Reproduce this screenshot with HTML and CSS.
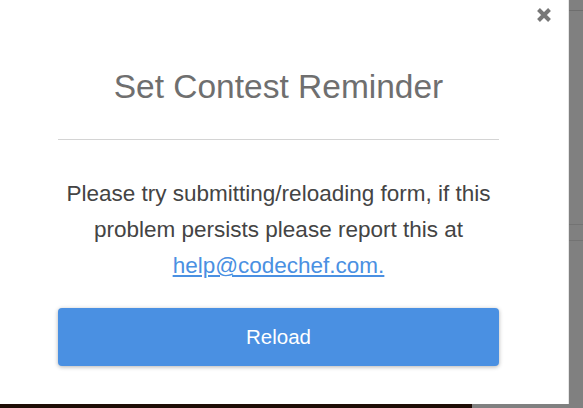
FILE: index.html
```html
<!DOCTYPE html>
<html>
<head>
<meta charset="utf-8">
<link rel="stylesheet" href="styles.css">
</head>
<body>
<div class="page">
  <div class="main">
    <div class="modal">
      <button class="close" aria-label="Close">
        <svg width="16" height="16" viewBox="0 0 16 16"><path d="M2.5 2.5 L13.5 13.5 M13.5 2.5 L2.5 13.5" stroke="#777" stroke-width="4" stroke-linecap="butt"/></svg>
      </button>
      <h2 class="title">Set Contest Reminder</h2>
      <hr class="rule">
      <p class="msg">Please try submitting/reloading form, if this problem persists please report this at <a href="#">help@codechef.com.</a></p>
      <button class="reload">Reload</button>
    </div>
    <div class="footer-strip"></div>
  </div>
  <div class="side">
    <div class="side-top"></div>
    <div class="side-mid"></div>
  </div>
</div>
</body>
</html>
```
FILE: styles.css
```css
* { box-sizing: border-box; }
html, body { margin: 0; padding: 0; }
body { background: #808080; font-family: "Liberation Sans", Arial, sans-serif; width: 583px; height: 408px; overflow: hidden; }
.page { display: flex; height: 408px; }
.main { width: 569px; display: flex; flex-direction: column; }
.modal {
  position: relative;
  background: #fff;
  height: 404px;
  padding: 67px 69px 0 58px;
  display: flex;
  flex-direction: column;
  align-items: stretch;
  border-right: 1px solid #e6e6e6;
}
.close {
  position: absolute; top: 7px; right: 16px;
  background: none; border: 0; padding: 0; width: 16px; height: 16px; cursor: pointer;
}
.close svg { display: block; }
.title {
  margin: 0; text-align: center; font-weight: normal; font-size: 33.5px; line-height: 40px; color: #6f6f6f;
}
.rule { margin: 32px 0 0; border: 0; border-top: 1px solid #d4d4d4; height: 0; }
.msg {
  margin: 36px 0 0; text-align: center; font-size: 22.5px; line-height: 36px; color: #444;
}
.msg a { color: #4a90e2; text-decoration: underline; }
.reload {
  margin-top: 24px; height: 58px; width: 100%;
  background: #4a90e2; color: #fff; border: 0; border-radius: 4px;
  font-family: "Liberation Sans", Arial, sans-serif; font-size: 20.5px;
  box-shadow: 0 1px 4px rgba(0,0,0,0.3);
}
.footer-strip { height: 4px; background: #808080; display: flex; }
.footer-strip::before { content: ""; width: 472px; background: #1e0c05; }
.side { flex: 1; display: flex; flex-direction: column; }
.side-top { height: 11px; border-bottom: 1px solid #6e6e6e; }
.side-mid { margin-top: 213px; height: 17px; border-top: 1px solid #737373; border-bottom: 1px solid #737373; }
```
